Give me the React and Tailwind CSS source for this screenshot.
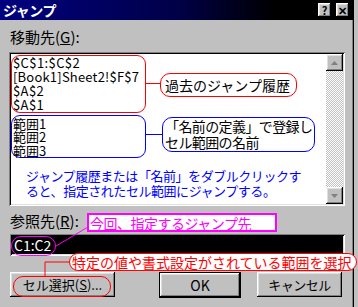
import React from "react"

const raised = "shadow-[inset_-1px_-1px_#000,inset_1px_1px_#fff,inset_-2px_-2px_#808080,inset_2px_2px_#dfdfdf]"
const sunken = "shadow-[inset_1px_1px_#808080,inset_-1px_-1px_#fff,inset_2px_2px_#000,inset_-2px_-2px_#dfdfdf]"

function TitleButton(props) {
    return (
        <div className={"w-[13px] h-[14px] bg-[#c0c0c0] flex items-center justify-center text-[11px] font-bold leading-none text-black " + raised}>
            {props.children}
        </div>
    )
}

function ScrollArrow(props) {
    return (
        <div className={"h-[17px] bg-[#c0c0c0] flex items-center justify-center " + raised}>
            <svg width="7" height="4" viewBox="0 0 7 4">
                {props.up
                    ? <polygon points="3.5,0 7,4 0,4" fill="#808080" />
                    : <polygon points="0,0 7,0 3.5,4" fill="#808080" />}
            </svg>
        </div>
    )
}

function ListBox() {
    return (
        <div className={"mt-[6px] h-[154px] w-[336px] p-[2px] bg-white flex " + sunken}>
            <div className="flex-1 overflow-hidden text-[13px] text-black">
                <div className="mt-[1px] w-[135px] border border-[#ff0000] rounded-[9px] pl-[1px] leading-[14px] tracking-[0.4px]">
                    <div>$C$1:$C$2</div>
                    <div className="whitespace-nowrap tracking-[0.2px]">[Book1]Sheet2!$F$7</div>
                    <div>$A$2</div>
                    <div>$A$1</div>
                </div>
                <div className="mt-[2px] w-[135px] border border-[#0000ff] rounded-[9px] pl-[1px] pt-[1px] leading-[13.4px]">
                    <div>範囲1</div>
                    <div>範囲2</div>
                    <div>範囲3</div>
                </div>
                <div className="mt-[10px] pl-[15px] text-[13px] leading-[15px] tracking-[-0.45px] text-[#0000ff] whitespace-nowrap">
                    <div>ジャンプ履歴または「名前」をダブルクリックす</div>
                    <div>ると、指定されたセル範囲にジャンプする。</div>
                </div>
            </div>
            <div className="w-[17px] flex flex-col">
                <ScrollArrow up />
                <div className="flex-1 bg-[repeating-conic-gradient(#ffffff_0_25%,#c0c0c0_0_50%)] bg-[length:2px_2px]"></div>
                <ScrollArrow />
            </div>
        </div>
    )
}

function Callouts() {
    return (
        <>
            {/* jump history */}
            <div className="absolute left-[145px] top-[83px] w-[15px] h-px bg-[#ff0000]"></div>
            <div className="absolute left-[160px] top-[73px] w-[137px] h-[24px] bg-white border border-[#ff0000] rounded-[10px] pl-[4px] flex items-center text-[14px] leading-[16px] text-black whitespace-nowrap">
                過去のジャンプ履歴
            </div>

            {/* defined names */}
            <div className="absolute left-[146px] top-[134px] w-[16px] h-px bg-[#0000ff]"></div>
            <div className="absolute left-[162px] top-[117px] w-[153px] h-[35px] bg-white border border-[#0000ff] rounded-[10px] pl-[2px] text-[14px] leading-[16px] text-black whitespace-nowrap tracking-[-0.6px]">
                <div>「名前の定義」で登録し</div>
                <div>セル範囲の名前</div>
            </div>

            {/* reference */}
            <svg className="absolute left-0 top-0" width="358" height="307">
                <line x1="56" y1="246" x2="88" y2="227" stroke="#ff00ff" strokeWidth="1" />
                <polyline points="69,262 45,262 45,277" fill="none" stroke="#ff0000" strokeWidth="1" />
            </svg>
            <div className="absolute left-[87px] top-[213px] w-[190px] h-[19px] bg-white border-2 border-[#ff00ff] pl-[1px] flex items-center text-[14px] leading-[16px] text-[#ff00ff] whitespace-nowrap tracking-[-0.5px]">
                今回、指定するジャンプ先
            </div>
            <div className="absolute left-[11px] top-[236px] w-[45px] h-[20px] border border-[#ff00ff] rounded-full"></div>

            {/* special cells */}
            <div className="absolute left-[69px] top-[253px] w-[288px] h-[18px] bg-white border border-[#ff0000] rounded-[9px] pl-[2px] flex items-center text-[14px] leading-[16px] text-[#ff0000] whitespace-nowrap">
                特定の値や書式設定がされている範囲を選択
            </div>
            <div className="absolute left-[13px] top-[276px] w-[98px] h-[21px] border border-[#ff0000] rounded-[10px]"></div>
        </>
    )
}

export default function App() {
    return (
        <div className="relative w-[358px] h-[307px] overflow-hidden bg-[#c0c0c0] font-['Noto_Sans_CJK_JP',sans-serif]">
            <div className="w-[354px] h-full flex flex-col shadow-[inset_-1px_0_#000,inset_-2px_0_#808080]">
                <div className="h-[20px] w-[353px] flex items-center justify-between pl-[3px] pr-[4px] bg-[linear-gradient(90deg,#000080,#000048_50%,#000000_78%)]">
                    <span className="text-white font-bold text-[14px] leading-none tracking-[-0.5px]">ジャンプ</span>
                    <div className="flex gap-[5px]">
                        <TitleButton>?</TitleButton>
                        <TitleButton>✕</TitleButton>
                    </div>
                </div>

                <div className="pl-[9px]">
                    <div className="mt-[8px] h-[18px] pl-[1px] text-[15px] leading-[18px] text-black">
                        移動先(<span className="underline">G</span>):
                    </div>

                    <ListBox />

                    <div className="mt-[6px] h-[18px] pl-[1px] text-[15px] leading-[18px] text-black">
                        参照先(<span className="underline">R</span>):
                    </div>

                    <div className={"mt-[4px] ml-[1px] w-[335px] h-[22px] p-[2px] bg-white " + sunken}>
                        <div className="h-full bg-black pl-[2px] text-[14px] leading-[18px] text-white">C1:C2</div>
                    </div>

                    <div className="mt-[16px] flex text-[13px] text-black">
                        <button className={"ml-[1px] w-[105px] h-[25px] bg-[#c0c0c0] flex items-center justify-center " + raised}>
                            セル選択(<span className="underline">S</span>)...
                        </button>
                        <button className={"ml-[44px] w-[82px] h-[26px] bg-[#c0c0c0] border border-black flex items-center justify-center text-[14px] " + raised}>
                            OK
                        </button>
                        <button className={"ml-[16px] w-[85px] h-[25px] bg-[#c0c0c0] flex items-center justify-center tracking-[-0.5px] " + raised}>
                            キャンセル
                        </button>
                    </div>
                </div>
            </div>
            <Callouts />
        </div>
    )
}
